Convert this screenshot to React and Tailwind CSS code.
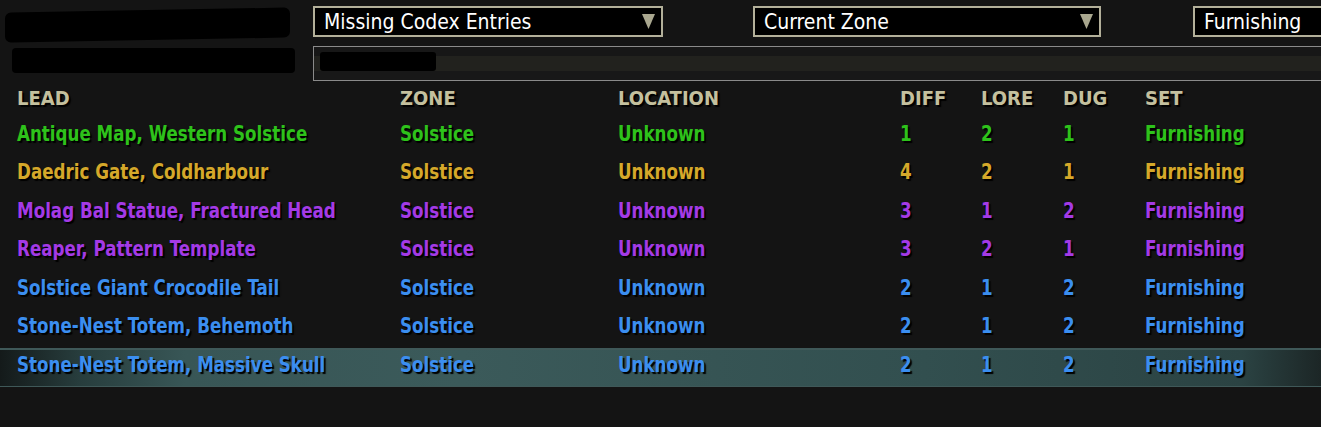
import React from 'react';

const rows = [
  { lead: 'Antique Map, Western Solstice', diff: 1, lore: 2, dug: 1, color: 'text-[#2ec21b]' },
  { lead: 'Daedric Gate, Coldharbour', diff: 4, lore: 2, dug: 1, color: 'text-[#d5a82a]' },
  { lead: 'Molag Bal Statue, Fractured Head', diff: 3, lore: 1, dug: 2, color: 'text-[#a43ae6]' },
  { lead: 'Reaper, Pattern Template', diff: 3, lore: 2, dug: 1, color: 'text-[#a43ae6]' },
  { lead: 'Solstice Giant Crocodile Tail', diff: 2, lore: 1, dug: 2, color: 'text-[#3b8ef0]' },
  { lead: 'Stone-Nest Totem, Behemoth', diff: 2, lore: 1, dug: 2, color: 'text-[#3b8ef0]' },
  { lead: 'Stone-Nest Totem, Massive Skull', diff: 2, lore: 1, dug: 2, color: 'text-[#3b8ef0]', active: true },
];

const cols = 'grid grid-cols-[383px_218px_282px_81px_82px_82px_1fr] pl-[17px] items-center';

const Cell = ({ children }) => (
  <span className="inline-block whitespace-nowrap origin-left scale-x-[0.885] -translate-y-[2px]">{children}</span>
);

const Dropdown = ({ label, width, arrow = true }) => (
  <div
    className={`${width} h-[31px] shrink-0 border-2 border-[#b3b09a] bg-black flex items-center justify-between pl-[9px] pr-[6px]`}
  >
    <span className="text-[21px] text-white leading-none translate-y-[1px] [text-shadow:1px_1px_0_#000]">{label}</span>
    {arrow && (
      <svg width="13" height="15" viewBox="0 0 13 15">
        <polygon points="0,0 13,0 6.5,15" fill="#a9a78f" />
      </svg>
    )}
  </div>
);

export default function App() {
  return (
    <div className="w-[1321px] h-[427px] overflow-hidden bg-[#141414] font-['Liberation_Sans_Narrow','DejaVu_Sans_Condensed',sans-serif]">
      <div className="flex">
        <div className="w-[313px] shrink-0 pt-[10px] pl-[5px] flex flex-col gap-[8px]">
          <div className="w-[285px] h-[30px] bg-black rounded-[6px] -skew-y-[1deg]" />
          <div className="w-[283px] h-[25px] ml-[7px] bg-black rounded-[4px]" />
        </div>
        <div className="flex-1 pt-[6px] flex flex-col">
          <div className="flex">
            <Dropdown label="Missing Codex Entries" width="w-[350px]" />
            <div className="w-[90px] shrink-0" />
            <Dropdown label="Current Zone" width="w-[348px]" />
            <div className="w-[92px] shrink-0" />
            <Dropdown label="Furnishing" width="w-[200px]" arrow={false} />
          </div>
          <div className="mt-[9px] h-[35px] border border-r-0 border-[#8a8a8a] flex flex-col">
            <div className="h-[9px] bg-[#171717]" />
            <div className="h-[15px] bg-[#22221e] relative">
              <div className="absolute left-[6px] -top-[4px] w-[116px] h-[19px] bg-black rounded-[3px]" />
            </div>
            <div className="flex-1 bg-[#181818]" />
          </div>
        </div>
      </div>

      <div className={`${cols} h-[33px] mt-[3px] text-[20px] font-bold text-[#c4c09e] [text-shadow:2px_2px_1px_#000]`}>
        <span className="-translate-y-[3px]">LEAD</span>
        <span className="-translate-y-[3px]">ZONE</span>
        <span className="-translate-y-[3px]">LOCATION</span>
        <span className="-translate-y-[3px]">DIFF</span>
        <span className="-translate-y-[3px]">LORE</span>
        <span className="-translate-y-[3px]">DUG</span>
        <span className="-translate-y-[3px]">SET</span>
      </div>

      <div className="flex flex-col">
        {rows.map((r) => (
          <div
            key={r.lead}
            className={`${cols} h-[38.5px] text-[21px] font-bold ${r.color} [text-shadow:2px_2px_1px_#000] ${
              r.active
                ? 'bg-[linear-gradient(90deg,#141a1a_0%,#273d3d_6%,#385656_14%,#3b5a5a_35%,#324f4f_70%,#2b4343_94%,#1c2626_100%)] border-t-2 border-b border-[#3f5858]'
                : ''
            }`}
          >
            <Cell>{r.lead}</Cell>
            <Cell>Solstice</Cell>
            <Cell>Unknown</Cell>
            <Cell>{r.diff}</Cell>
            <Cell>{r.lore}</Cell>
            <Cell>{r.dug}</Cell>
            <Cell>Furnishing</Cell>
          </div>
        ))}
      </div>
    </div>
  );
}
